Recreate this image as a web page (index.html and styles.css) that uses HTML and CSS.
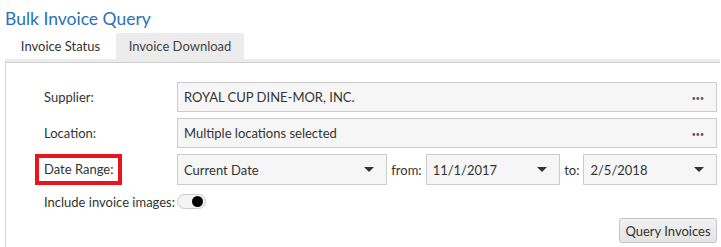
FILE: index.html
```html
<!DOCTYPE html>
<html>
<head>
<meta charset="utf-8">
<link rel="stylesheet" href="styles.css">
</head>
<body>
<div class="page">
  <h1 class="title">Bulk Invoice Query</h1>
  <div class="tabs">
    <div class="tab active">Invoice Status</div>
    <div class="tab">Invoice Download</div>
  </div>
  <div class="band"></div>
  <div class="panel">
    <div class="form">
      <div class="label">Supplier:</div>
      <div class="field picker"><span>ROYAL CUP DINE-MOR, INC.</span><span class="dots">&#8226;&#8226;&#8226;</span></div>
      <div class="label">Location:</div>
      <div class="field picker"><span>Multiple locations selected</span><span class="dots">&#8226;&#8226;&#8226;</span></div>
      <div class="label"><span class="highlight">Date Range:</span></div>
      <div class="daterow">
        <div class="field select s1"><span>Current Date</span><span class="caret"></span></div>
        <span class="sep">from:</span>
        <div class="field select s2"><span>11/1/2017</span><span class="caret"></span></div>
        <span class="sep">to:</span>
        <div class="field select s3"><span>2/5/2018</span><span class="caret"></span></div>
      </div>
    </div>
    <div class="togglerow">
      <span class="tlabel">Include invoice images:</span>
      <span class="toggle"><span class="knob"></span></span>
    </div>
    <div class="actions">
      <button class="btn">Query Invoices</button>
    </div>
  </div>
</div>
</body>
</html>
```
FILE: styles.css
```css
html, body {
  margin: 0;
  padding: 0;
  background: #fff;
}
body {
  font-family: "Lato", "Open Sans", sans-serif;
  font-size: 13px;
  color: #333;
  width: 721px;
  height: 247px;
  overflow: hidden;
}
.page {
  padding-left: 5px;
  padding-right: 1px;
}
.title {
  margin: 0;
  padding-top: 7px;
  height: 33px;
  font-size: 17.5px;
  font-weight: normal;
  color: #2a70b8;
  line-height: 24px;
  box-sizing: border-box;
}
.tabs {
  display: flex;
  height: 26px;
}
.tab {
  display: flex;
  align-items: center;
  justify-content: center;
  box-sizing: border-box;
  color: #333;
}
.tab.active {
  width: 111px;
  background: #fff;
}
.tab:not(.active) {
  width: 128px;
  background: #ececec;
  color: #444;
}
.band {
  height: 3px;
  background: #ececec;
  border-bottom: 1px solid #cfcfcf;
}
.panel {
  border-left: 1px solid #d5d5d5;
  padding: 19px 3px 0 38px;
  height: 184px;
  box-sizing: border-box;
}
.form {
  display: grid;
  grid-template-columns: 133px 540px;
  row-gap: 6px;
  align-items: center;
}
.label {
  color: #333;
}
.highlight {
  display: inline-block;
  margin-left: -9px;
  padding: 3px 5px 4px 5px;
  border: 4px solid #e8141e;
}
.field {
  display: flex;
  align-items: center;
  justify-content: space-between;
  height: 30px;
  box-sizing: border-box;
  border: 1px solid #cccccc;
  background: #f6f6f6;
  padding: 0 12px 0 6px;
  color: #333;
}
.dots {
  font-size: 7px;
  color: #555;
  letter-spacing: 0;
  margin-top: 1px;
}
.daterow {
  display: flex;
  align-items: center;
  height: 31px;
}
.daterow .field {
  height: 31px;
}
.s1 { width: 211px; }
.s2 { width: 135px; }
.s3 { width: 134px; }
.sep {
  padding: 0 4px;
  color: #333;
}
.caret {
  width: 0;
  height: 0;
  border-left: 5px solid transparent;
  border-right: 5px solid transparent;
  border-top: 5px solid #333;
}
.togglerow {
  display: flex;
  align-items: center;
  margin-top: 9px;
  height: 15px;
}
.tlabel {
  margin-right: 2px;
}
.toggle {
  display: flex;
  align-items: center;
  justify-content: flex-end;
  width: 29px;
  height: 15px;
  box-sizing: border-box;
  border: 1px solid #ccc;
  border-radius: 8px;
  background: #f4f4f4;
  padding-right: 2px;
}
.knob {
  width: 11px;
  height: 11px;
  border-radius: 50%;
  background: #000;
}
.actions {
  display: flex;
  justify-content: flex-end;
  width: 673px;
  margin-top: 9px;
}
.btn {
  font-family: inherit;
  font-size: 13px;
  color: #333;
  width: 98px;
  height: 25px;
  border: 1px solid #c4c4c4;
  border-radius: 3px;
  background: linear-gradient(#f2f2f2, #e4e4e4);
  padding: 0;
}
```
